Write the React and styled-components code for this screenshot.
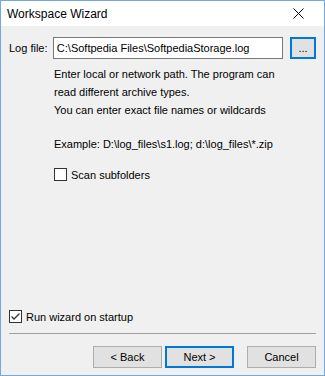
import React from "react";
import styled, { createGlobalStyle, css } from "styled-components";

const Global = createGlobalStyle`
  html, body { margin: 0; padding: 0; background: #f0f0f0; }
  * { box-sizing: border-box; }
  body { font-family: "Liberation Sans", Arial, sans-serif; font-size: 11px; color: #000; }
`;

const Window = styled.div`
  width: 325px;
  height: 376px;
  border: 1px solid #74a8e4;
  background: #f0f0f0;
  display: flex;
  flex-direction: column;
`;

const TitleBar = styled.div`
  height: 25px;
  background: #fff;
  display: flex;
  align-items: center;
  justify-content: space-between;
  padding: 0 20px 0 6px;
  font-size: 12px;
`;

const Close = styled.svg`
  width: 11px;
  height: 11px;
  display: block;
`;

const Body = styled.div`
  flex: 1;
  display: flex;
  flex-direction: column;
  padding: 11px 8px 7px 8px;
`;

const Row = styled.div`
  display: flex;
  align-items: center;
`;

const Label = styled.span`
  width: 44px;
`;

const TextBox = styled.div`
  width: 231px;
  height: 22px;
  background: #fff;
  border: 1px solid #7a7a7a;
  display: flex;
  align-items: center;
  padding-left: 3px;
  white-space: nowrap;
  margin-right: 7px;
`;

const Button = styled.div`
  height: 22px;
  width: ${(p) => p.$w || 69}px;
  background: #e1e1e1;
  border: 1px solid #adadad;
  display: flex;
  align-items: center;
  justify-content: center;
  ${(p) =>
    p.$focus &&
    css`
      border: 2px solid #0078d7;
    `}
`;

const Info = styled.div`
  margin-left: 45px;
  display: flex;
  flex-direction: column;
`;

const Line = styled.div`
  line-height: 18px;
  margin-top: ${(p) => p.$mt || 0}px;
`;

const CheckRow = styled.label`
  display: flex;
  align-items: center;
  gap: 4px;
  height: 13px;
  margin-top: ${(p) => p.$mt || 0}px;
`;

const Box = styled.span`
  width: 13px;
  height: 13px;
  border: 1px solid #333;
  background: #fff;
  display: flex;
  align-items: center;
  justify-content: center;
`;

const Footer = styled.div`
  margin-top: auto;
  display: flex;
  flex-direction: column;
`;

const Separator = styled.div`
  height: 1px;
  background: #a0a0a0;
  margin: 10px 0 12px 0;
`;

const Buttons = styled.div`
  display: flex;
  justify-content: flex-end;
  gap: 3px;
`;

const Spacer = styled.div`
  width: 7px;
`;

export default function App() {
  return (
    <>
      <Global />
      <Window>
        <TitleBar>
          <span>Workspace Wizard</span>
          <Close viewBox="0 0 11 11">
            <path d="M0.5 0.5 L10.5 10.5 M10.5 0.5 L0.5 10.5" stroke="#000" strokeWidth="1" fill="none" />
          </Close>
        </TitleBar>
        <Body>
          <Row>
            <Label>Log file:</Label>
            <TextBox>C:\Softpedia Files\SoftpediaStorage.log</TextBox>
            <Button $w={26} $focus>...</Button>
          </Row>
          <Info>
            <Line $mt={6}>Enter local or network path. The program can</Line>
            <Line>read different archive types.</Line>
            <Line>You can enter exact file names or wildcards</Line>
            <Line $mt={16}>Example: D:\log_files\s1.log; d:\log_files\*.zip</Line>
            <CheckRow $mt={15}>
              <Box />
              <span>Scan subfolders</span>
            </CheckRow>
          </Info>
          <Footer>
            <CheckRow>
              <Box>
                <svg width="11" height="11" viewBox="0 0 11 11">
                  <path d="M1.5 5.5 L4 8 L9.5 2.5" stroke="#333" strokeWidth="1.3" fill="none" />
                </svg>
              </Box>
              <span>Run wizard on startup</span>
            </CheckRow>
            <Separator />
            <Buttons>
              <Button>&lt; Back</Button>
              <Button $focus>Next &gt;</Button>
              <Spacer />
              <Button>Cancel</Button>
            </Buttons>
          </Footer>
        </Body>
      </Window>
    </>
  );
}
